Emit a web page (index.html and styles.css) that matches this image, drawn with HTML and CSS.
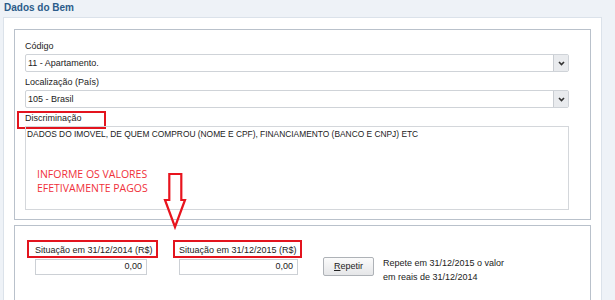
FILE: index.html
```html
<!DOCTYPE html>
<html lang="pt-BR">
<head>
    <meta charset="UTF-8">
    <title>Dados do Bem</title>
    <link rel="stylesheet" href="styles.css">
</head>
<body>
<div class="page">
    <h1 class="title">Dados do Bem</h1>

    <div class="panel">
        <!-- dados gerais -->
        <div class="box box-top">
            <div class="field">
                <label>Código</label>
                <div class="select">
                    <span>11 - Apartamento.</span>
                    <i class="drop"><svg width="7" height="5" viewBox="0 0 7 5"><path d="M1 1 L3.5 3.6 L6 1" fill="none" stroke="#333" stroke-width="1.6"/></svg></i>
                </div>
            </div>
            <div class="field">
                <label>Localização (País)</label>
                <div class="select">
                    <span>105 - Brasil</span>
                    <i class="drop"><svg width="7" height="5" viewBox="0 0 7 5"><path d="M1 1 L3.5 3.6 L6 1" fill="none" stroke="#333" stroke-width="1.6"/></svg></i>
                </div>
            </div>
            <div class="field">
                <label><span class="mark mark-desc">Discriminação</span></label>
                <div class="memo">
                    DADOS DO IMOVEL, DE QUEM COMPROU (NOME E CPF), FINANCIAMENTO (BANCO E CNPJ) ETC
                    <div class="note">INFORME OS VALORES<br>EFETIVAMENTE PAGOS</div>
                </div>
            </div>
        </div>

        <!-- valores -->
        <div class="box box-values">
            <div class="col">
                <label><span class="mark">Situação em 31/12/2014 (R$)</span></label>
                <div class="num">0,00</div>
            </div>
            <div class="col">
                <label><span class="mark mark-right">Situação em 31/12/2015 (R$)</span></label>
                <div class="num num-wide">0,00</div>
            </div>
            <button class="btn"><u>R</u>epetir</button>
            <p class="hint">Repete em 31/12/2015 o valor<br>em reais de 31/12/2014</p>
        </div>
    </div>

    <svg class="arrow" width="32" height="64" viewBox="0 0 32 64">
        <path d="M9.3 6 H21.3 V32 H25 L15 59 L5 32 H9.3 Z" fill="none" stroke="#e8141e" stroke-width="2.2"/>
    </svg>
</div>
</body>
</html>
```

FILE: styles.css
```css
body {
    margin: 0;
    background-color: #eef2f7;
    font-family: "Liberation Sans", Arial, sans-serif;
    font-size: 9px;
    color: #222;
}
.page {
    position: relative;
    height: 300px;
    overflow: hidden;
}
.title {
    margin: 0;
    height: 17px;
    box-sizing: border-box;
    padding: 2px 0 0 4px;
    font-size: 10px;
    line-height: 12px;
    font-weight: bold;
    color: #2b5c8a;
}
.panel {
    margin-left: 3px;
    width: 599px;
    height: 300px;
    box-sizing: border-box;
    padding: 11px 10px 10px 10px;
    background-color: #fff;
    border: 1px solid #dbe2ea;
}
.box {
    border: 1px solid #b9c1cb;
}
.box-top {
    padding: 9px 21px 9px 10px;
}
.field label {
    display: block;
    line-height: 14px;
}
.field + .field label {
    margin-top: 3px;
}
.select {
    display: flex;
    height: 18px;
    box-sizing: border-box;
    margin-top: 1px;
    padding-left: 2px;
    border: 1px solid #cfd3d8;
    border-radius: 2px;
    line-height: 16px;
}
.select span {
    flex: 1;
}
.drop {
    width: 14px;
    display: flex;
    align-items: center;
    justify-content: center;
    background-color: #e9ebee;
    border-left: 1px solid #c9cdd2;
}
.memo {
    position: relative;
    height: 84px;
    box-sizing: border-box;
    margin-top: 1px;
    padding: 0 1px;
    border: 1px solid #d4d7db;
    font-size: 8.4px;
    line-height: 14px;
}
.note {
    position: absolute;
    left: 11px;
    top: 40px;
    font-family: "Open Sans", sans-serif;
    font-size: 10.5px;
    line-height: 14px;
    color: #f0303a;
}
.mark {
    display: inline-block;
    position: relative;
    line-height: 14px;
}
.mark::after {
    content: "";
    position: absolute;
    left: -8px;
    right: -5px;
    top: -3px;
    bottom: -1px;
    border: 2px solid #e3141e;
}
.mark-desc::after {
    top: 0;
    bottom: -4px;
    right: -24px;
}
.mark-right::after {
    left: -6px;
}
.box-values {
    margin-top: 5px;
    padding: 17px 20px 40px 20px;
    display: flex;
    align-items: flex-start;
}
.col {
    width: 144px;
}
.col label {
    display: block;
    line-height: 14px;
}
.num {
    width: 112px;
    height: 16px;
    box-sizing: border-box;
    margin-top: 2px;
    padding-right: 4px;
    border: 1px solid #ccd0d5;
    text-align: right;
    line-height: 12px;
}
.num-wide {
    width: 119px;
}
.btn {
    width: 51px;
    height: 19px;
    margin-top: 14px;
    padding: 0 0 2px 0;
    font-family: "Liberation Sans", Arial, sans-serif;
    font-size: 9px;
    color: #222;
    background: linear-gradient(#fbfbfb, #e5e6e8);
    border: 1px solid #aeb2b7;
    border-radius: 2px;
}
.hint {
    margin: 13px 0 0 9px;
    line-height: 14px;
}
.arrow {
    position: absolute;
    left: 160px;
    top: 168px;
}
```
